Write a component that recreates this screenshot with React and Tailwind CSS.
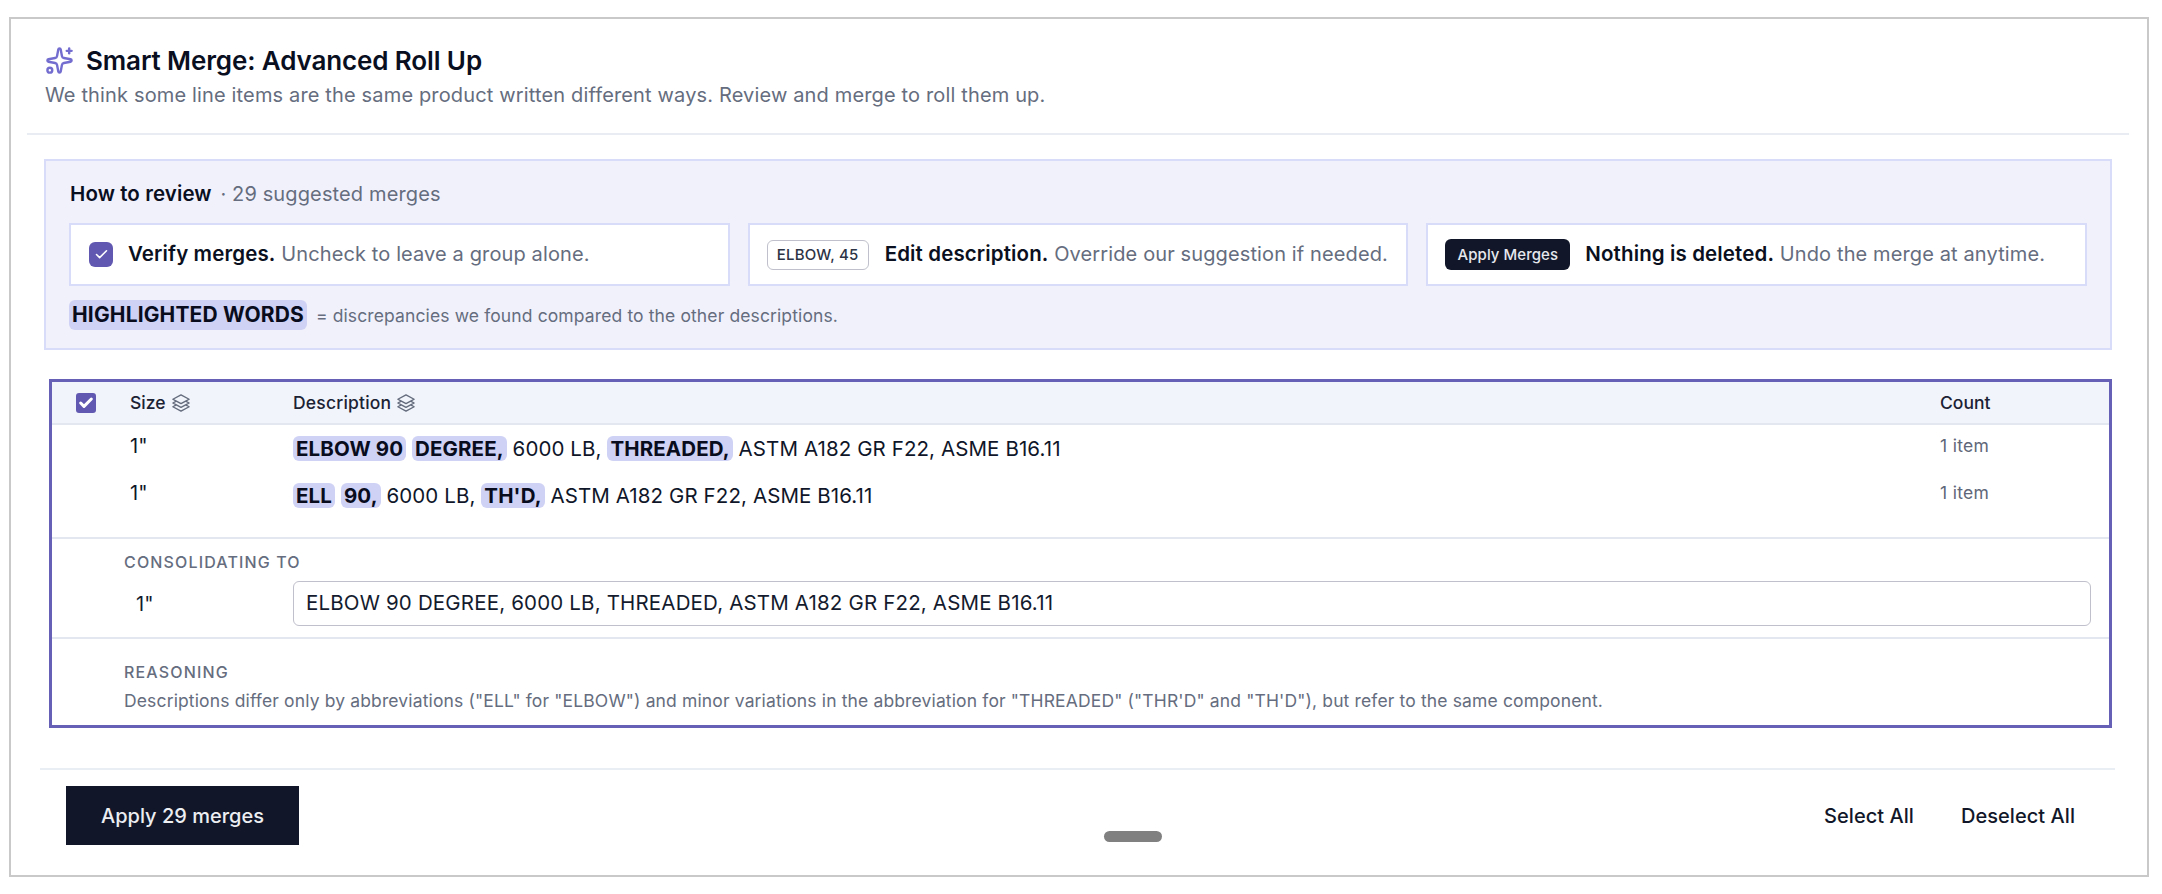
import { Check, Sparkles } from "lucide-react";

function StackIcon() {
  return (
    <svg
      className="size-5 text-[#646c7d]"
      viewBox="0 0 24 24"
      fill="none"
      stroke="currentColor"
      strokeWidth={1.7}
      strokeLinecap="round"
      strokeLinejoin="round"
    >
      <path d="M6.429 9.75 2.25 12l4.179 2.25m0-4.5 5.571 3 5.571-3m-11.142 0L2.25 7.5 12 2.25l9.75 5.25-4.179 2.25m0 0L21.75 12l-4.179 2.25m0 0 4.179 2.25L12 21.75 2.25 16.5l4.179-2.25m11.142 0-5.571 3-5.571-3" />
    </svg>
  );
}

function Mark({ children }) {
  return (
    <mark className="rounded-md bg-[#cfd2f4] px-[3px] font-bold tracking-[0.12px] text-[#080c1c]">
      {children}
    </mark>
  );
}

function Tip({ badge, title, children }) {
  return (
    <div className="flex h-[63px] items-center border-2 border-[#d9dcf8] bg-white px-[17px] text-xl tracking-[0.12px] whitespace-nowrap text-[#656d7e]">
      {badge}
      <p>
        <span className="text-[20.5px] font-semibold text-[#0b1020]">{title}</span> {children}
      </p>
    </div>
  );
}

function Row({ size, children }) {
  return (
    <div className="flex h-[47px] text-xl leading-6 text-[#0f1629]">
      <div className="w-[241px] shrink-0 pt-[9px] pl-[78px]">{size}</div>
      <p className="w-[1647px] pt-3 text-[20.5px] tracking-[0.1px]">{children}</p>
      <span className="pt-[9px] text-[17.5px] tracking-[0.3px] text-[#5f6779]">1 item</span>
    </div>
  );
}

export default function App() {
  return (
    <div className="h-[894px] w-[2162px] bg-white pt-[17px] pl-[9px] font-['Inter',sans-serif]">
      <div className="relative h-[860px] w-[2140px] border-2 border-[#c9c9c9] px-4">
        <header className="mr-0.5 h-[116px] border-b-2 border-[#e9ecf3] pt-[23px] pl-[18px]">
          <div className="flex h-9 items-center">
            <Sparkles className="size-[29px] text-[#746dd0]" strokeWidth={2} />
            <h1 className="ml-3 text-[26px] font-semibold tracking-[-0.12px] text-[#0a0f1f]">
              Smart Merge: Advanced Roll Up
            </h1>
          </div>
          <p className="text-xl leading-[34px] tracking-[0.15px] text-[#656d7e]">
            We think some line items are the same product written different ways. Review and merge to roll them up.
          </p>
        </header>

        <section className="mt-6 mr-[19px] ml-[17px] h-[191px] border-2 border-[#d9dcf8] bg-[#f1f1fc] px-[23px]">
          <p className="pt-[19px] pl-px text-xl leading-[28px] tracking-[0.13px] text-[#656d7e]">
            <span className="mr-[3px] text-[20.5px] font-semibold tracking-[0.1px] text-[#0a0f1f]">How to review</span> · 29 suggested merges
          </p>
          <div className="mt-[15px] grid grid-cols-3 gap-[18px]">
            <Tip
              title="Verify merges."
              badge={
                <span className="mr-[15px] ml-px flex h-[25px] w-6 items-center justify-center rounded-md bg-[#6159b1]">
                  <Check className="size-[15px] text-white" strokeWidth={2.5} />
                </span>
              }
            >
              Uncheck to leave a group alone.
            </Tip>
            <Tip
              title="Edit description."
              badge={
                <span className="mr-4 flex h-[30px] w-[102px] items-center justify-center rounded-md border-[1.5px] border-[#bfc0cb] text-[15px] font-medium tracking-[0.2px] text-[#2c3345]">
                  ELBOW, 45
                </span>
              }
            >
              Override our suggestion if needed.
            </Tip>
            <Tip
              title="Nothing is deleted."
              badge={
                <span className="mr-[15px] flex h-[31px] w-[125px] items-center justify-center rounded-md bg-[#111729] text-[15px] font-medium tracking-[0.05px] text-[#e6e8ee]">
                  Apply Merges
                </span>
              }
            >
              Undo the merge at anytime.
            </Tip>
          </div>
          <div className="mt-3.5 flex h-[30px] items-center text-[17.5px] text-[#656d7e]">
            <span className="mr-[9px] rounded-md bg-[#cfd2f4] px-[3px] text-[21px] leading-[30px] font-bold tracking-[0.15px] text-[#080c1c]">
              HIGHLIGHTED WORDS
            </span>
            <span className="pt-0.5 tracking-[0.12px]">= discrepancies we found compared to the other descriptions.</span>
          </div>
        </section>

        <section className="mt-[29px] mr-[19px] ml-[22px] h-[349px] border-3 border-[#6660b6] text-[#0f1629]">
          <div className="flex h-[43px] items-center border-b-2 border-[#e2e7f0] bg-[#f1f4fa] text-[17.5px] font-medium text-[#1b2234]">
            <span className="mr-[34px] ml-6 flex size-5 items-center justify-center rounded-[3px] bg-[#6159b1]">
              <Check className="size-4 text-white" strokeWidth={4.5} />
            </span>
            <div className="flex w-[163px] items-center gap-[5px]">
              <span className="pt-0.5">Size</span> <StackIcon />
            </div>
            <div className="flex w-[1647px] items-center gap-[5px]">
              <span className="pt-0.5 tracking-[0.2px]">Description</span> <StackIcon />
            </div>
            <span className="pt-0.5">Count</span>
          </div>
          <div className="h-[114px] border-b-2 border-[#e2e7f0]">
            <Row size={'1"'}>
              <Mark>ELBOW 90</Mark> <Mark>DEGREE,</Mark> 6000 LB, <Mark>THREADED,</Mark> ASTM A182 GR F22, ASME B16.11
            </Row>
            <Row size={'1"'}>
              <Mark>ELL</Mark> <Mark>90,</Mark> 6000 LB, <Mark>TH'D,</Mark> ASTM A182 GR F22, ASME B16.11
            </Row>
          </div>
          <div className="h-[100px] border-b-2 border-[#e2e7f0] pt-[11px] pl-[72px]">
            <h2 className="text-base leading-6 font-medium tracking-[1.15px] text-[#656d7e]">CONSOLIDATING TO</h2>
            <div className="mt-[7px] flex items-center text-xl text-[#141b2e]">
              <span className="w-[169px] pl-3">{'1"'}</span>
              <div className="h-[45px] w-[1798px] rounded-md border-[1.5px] border-[#bfc0cb] pl-3 text-[20.5px] leading-[42px] tracking-[0.17px]">
                ELBOW 90 DEGREE, 6000 LB, THREADED, ASTM A182 GR F22, ASME B16.11
              </div>
            </div>
          </div>
          <div className="pt-[21px] pl-[72px] text-[#656d7e]">
            <h2 className="text-base leading-6 font-medium tracking-[1.15px]">REASONING</h2>
            <p className="mt-[3px] text-[17.5px] leading-7 tracking-[0.14px]">
              Descriptions differ only by abbreviations ("ELL" for "ELBOW") and minor variations in the abbreviation for
              "THREADED" ("THR'D" and "TH'D"), but refer to the same component.
            </p>
          </div>
        </section>

        <footer className="mt-10 mr-4 ml-[13px] flex justify-between border-t-2 border-[#e9eef4] pt-4 text-xl font-medium text-[#111729]">
          <button className="ml-[26px] h-[59px] w-[233px] bg-[#111729] text-[#eceef2]">Apply 29 merges</button>
          <div className="mr-10 flex items-center gap-[47px] tracking-[0.05px]">
            <button>Select All</button>
            <button>Deselect All</button>
          </div>
        </footer>

        {/* drag handle */}
        <div className="absolute bottom-[33px] left-[1093px] h-[11px] w-[58px] rounded-full bg-[#808080]" />
      </div>
    </div>
  );
}
